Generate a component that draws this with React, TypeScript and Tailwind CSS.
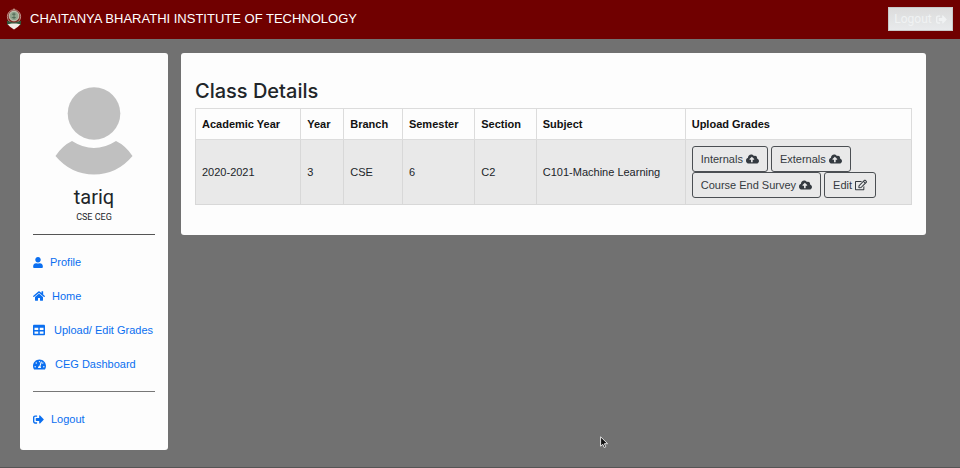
import type { ReactNode } from 'react';
import {
  FaCloudUploadAlt,
  FaHome,
  FaRegEdit,
  FaSignOutAlt,
  FaTable,
  FaTachometerAlt,
  FaUser,
} from 'react-icons/fa';

function Crest() {
  return (
    <svg viewBox="0 0 16 22" className="h-[22px] w-4 shrink-0" aria-hidden="true">
      <path d="M8 0l1.400 2.400H6.600z" fill="#c9a48c" />
      <ellipse cx="8" cy="8.600" rx="6.600" ry="6.800" fill="#7a2a22" stroke="#c9a198" strokeWidth="0.9" />
      <circle cx="8" cy="8" r="4.900" fill="#93a78f" stroke="#e0dace" strokeWidth="0.8" />
      <path d="M6 6.200h3.600M8 4.600v6.600M5.800 9.600h4" stroke="#476350" strokeWidth="0.8" />
      <path d="M.8 12.600c4 2.400 10.400 2.400 14.400 0l-.6 4.400H1.400z" fill="#2f5b3f" />
      <path d="M1.600 16.200l4-.6h4.800l4 .6-2.400 2.600L8 21.600l-4-2.800z" fill="#f3ece6" />
    </svg>
  );
}

function Avatar() {
  return (
    <svg viewBox="0 0 78 88" className="h-[88px] w-[78px]" role="img" aria-label="Profile picture">
      <circle cx="39" cy="26.500" r="26.300" fill="#c0c0c0" />
      <path d="M17 54Q39 68 61 54Q70.500 58.500 77.500 69Q62 87.500 39 87.500T.5 69Q7.500 58.500 17 54Z" fill="#c0c0c0" />
    </svg>
  );
}

function NavLink({ icon, gap, children }: { icon: ReactNode; gap: string; children: ReactNode }) {
  return (
    <a href="#" className={`flex h-[18px] items-center whitespace-nowrap text-[#0b6ff0] ${gap}`}>
      {icon}
      {children}
    </a>
  );
}

function GradeButton({ icon, children }: { icon: ReactNode; children: ReactNode }) {
  return (
    <button
      type="button"
      className="flex h-[26px] items-center gap-[3px] rounded-[3px] border border-[#4b4f53] px-2 text-[11px] leading-4 text-[#343a40]"
    >
      {children}
      {icon}
    </button>
  );
}

const columns = [
  { name: 'Academic Year', width: 'w-[14.7%]' },
  { name: 'Year', width: 'w-[6%]' },
  { name: 'Branch', width: 'w-[8.2%]' },
  { name: 'Semester', width: 'w-[10.1%]' },
  { name: 'Section', width: 'w-[8.6%]' },
  { name: 'Subject', width: 'w-[20.8%]' },
  { name: 'Upload Grades', width: 'w-[31.6%]' },
];

const values = ['2020-2021', '3', 'CSE', '6', 'C2', 'C101-Machine Learning'];

export default function App() {
  return (
    <div className="relative min-h-screen border-b border-[#555] bg-[#717171] font-[Roboto,'Liberation_Sans',sans-serif] text-[#212529]">
      <header className="flex h-[39px] items-center justify-between bg-[#700000] pr-[7px] pb-px pl-[6px]">
        <div className="flex items-center gap-2">
          <Crest />
          <span className="font-['Liberation_Sans',Arial,sans-serif] text-[13px] leading-5 text-white">
            CHAITANYA BHARATHI INSTITUTE OF TECHNOLOGY
          </span>
        </div>
        <button
          type="button"
          className="flex h-6 w-[65px] items-center justify-center gap-1 border border-[#c9c9c9] bg-linear-to-b from-[#dcdcdc] to-[#e8eaec] text-[12px] text-[#f0f2f3]"
        >
          Logout <FaSignOutAlt className="size-[11px]" />
        </button>
      </header>

      <div className="flex items-start gap-[13px] pt-[14px] pr-[34px] pb-[17px] pl-5">
        <aside className="w-[148px] shrink-0 rounded-[3px] bg-[#fdfdfd] px-[13px] pt-[34px] pb-[22px]">
          <div className="flex flex-col items-center">
            <Avatar />
            <h2 className="mt-2 text-[20px] leading-7">tariq</h2>
            <p className="text-[9px] leading-3">CSE CEG</p>
          </div>
          <hr className="mt-[11px] border-[#555]" />
          <nav className="mt-[18px] flex flex-col gap-4 font-['Liberation_Sans',Arial,sans-serif] text-[11px]">
            <NavLink gap="gap-[7px]" icon={<FaUser className="h-[11px] w-[10px] shrink-0" />}>Profile</NavLink>
            <NavLink gap="gap-[7px]" icon={<FaHome className="size-3 shrink-0" />}>Home</NavLink>
            <NavLink gap="gap-[9px]" icon={<FaTable className="size-3 shrink-0" />}>Upload/ Edit Grades</NavLink>
            <NavLink gap="gap-[9px]" icon={<FaTachometerAlt className="size-[13px] shrink-0" />}>CEG Dashboard</NavLink>
          </nav>
          <hr className="my-[18px] border-[#777]" />
          <div className="font-['Liberation_Sans',Arial,sans-serif] text-[11px]">
            <NavLink gap="gap-[7px]" icon={<FaSignOutAlt className="size-[11px] shrink-0" />}>Logout</NavLink>
          </div>
        </aside>

        <main className="min-w-0 flex-1 rounded-[3px] bg-[#fdfdfd] px-[14px] pt-[21px] pb-[30px]">
          <h1 className="font-['Inter','Liberation_Sans',sans-serif] text-[20px] leading-[34px] font-medium">
            Class Details
          </h1>
          <table className="w-full table-fixed border-collapse font-['Liberation_Sans',Arial,sans-serif] text-[11px] leading-4">
            <thead>
              <tr className="h-[31px]">
                {columns.map((column) => (
                  <th
                    key={column.name}
                    scope="col"
                    className={`border border-[#dcdcdc] px-[6px] text-left font-bold whitespace-nowrap text-[#111] ${column.width}`}
                  >
                    {column.name}
                  </th>
                ))}
              </tr>
            </thead>
            <tbody>
              <tr className="h-[65px] bg-[#e9e9e9]">
                {values.map((value) => (
                  <td key={value} className="border border-[#d8d8d8] px-[6px] whitespace-nowrap">
                    {value}
                  </td>
                ))}
                <td className="border border-[#d8d8d8] px-[6px] py-[6px]">
                  <div className="flex flex-wrap gap-x-[3px]">
                    <GradeButton icon={<FaCloudUploadAlt className="h-3 w-[13px]" />}>Internals</GradeButton>
                    <GradeButton icon={<FaCloudUploadAlt className="h-3 w-[13px]" />}>Externals</GradeButton>
                    <div className="basis-full" />
                    <GradeButton icon={<FaCloudUploadAlt className="h-3 w-[13px]" />}>Course End Survey</GradeButton>
                    <GradeButton icon={<FaRegEdit className="size-3" />}>Edit</GradeButton>
                  </div>
                </td>
              </tr>
            </tbody>
          </table>
        </main>
      </div>

      <svg viewBox="0 0 8 12" className="absolute top-[436px] left-[600px] h-3 w-2" aria-hidden="true">
        <path d="M.6.8v9.400l2.200-1.900 1.400 3.200 1.600-.7-1.400-3.100h3.200z" fill="#111" stroke="#e4e4e4" strokeWidth="1" />
      </svg>
    </div>
  );
}
